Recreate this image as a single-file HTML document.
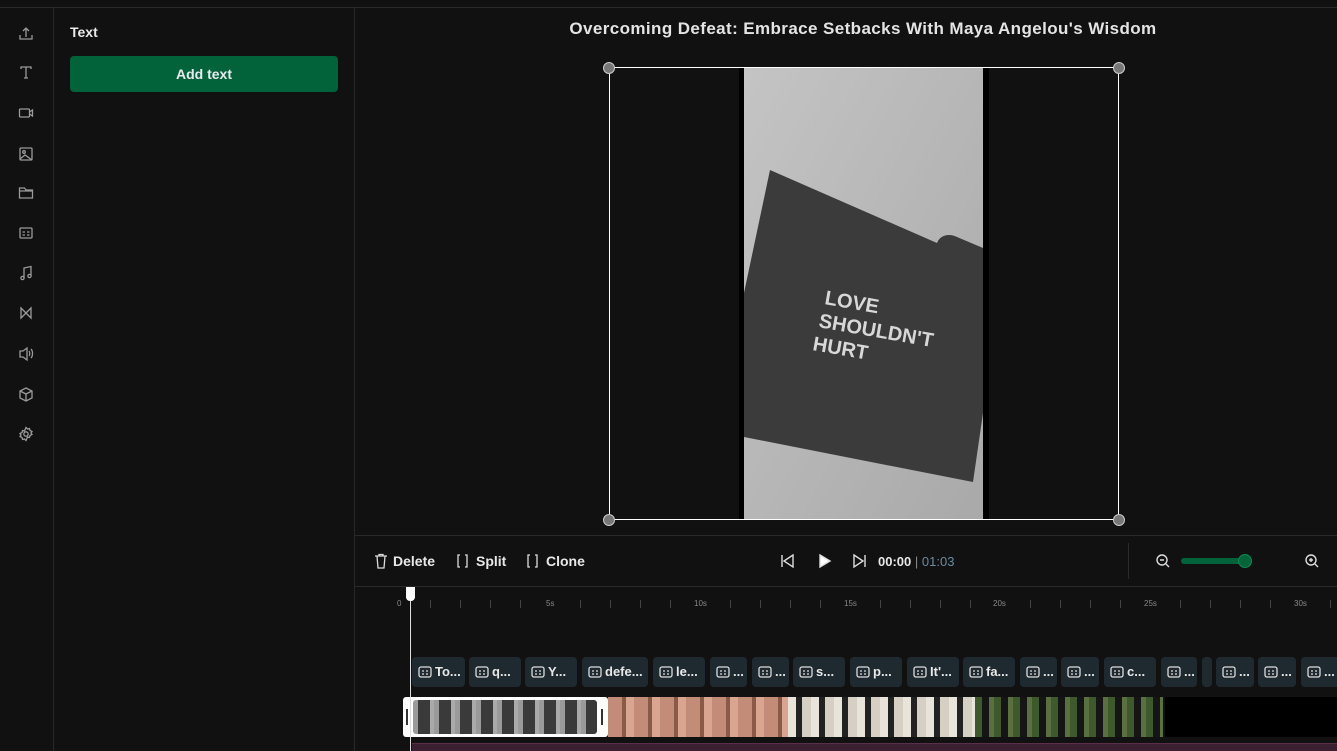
<!DOCTYPE html>
<html><head><meta charset="utf-8"><style>
*{margin:0;padding:0;box-sizing:border-box}
body{width:1337px;height:751px;overflow:hidden;background:#111112;font-family:"Liberation Sans",sans-serif;color:#e8e8e8;position:relative}
.abs{position:absolute}
.clip{position:absolute;top:657px;height:30px;background:#1f2a30;border-radius:4px;font-size:13px;font-weight:bold;color:#e8e8e8;line-height:30px;padding-left:6px;white-space:nowrap;overflow:hidden}
.clip svg{vertical-align:-3px;margin-right:3px}
.tk{position:absolute;top:600px;width:1px;height:8px;background:#444}
.lb{position:absolute;top:599px;font-size:8px;color:#888}
</style></head><body>
<div class="abs" style="left:0;top:7px;width:1337px;height:1px;background:#2a2a2a"></div>
<div class="abs" style="left:53px;top:8px;width:1px;height:743px;background:#262626"></div>
<div class="abs" style="left:354px;top:8px;width:1px;height:743px;background:#262626"></div>
<svg class="abs" style="left:18px;top:26px" width="16" height="440" fill="none" stroke="#9a9a9a" stroke-width="1.3">
<path d="M2 9v4h12V9M8 11V2M5 5l3-3 3 3"/>
<path d="M3 43v-2h10v2M8 41v11M6 52h4"/>
<rect x="1.5" y="83" width="10" height="8" rx="1"/><path d="M11.5 86l3-2v6l-3-2"/>
<rect x="2" y="122" width="12" height="12" rx="1"/><circle cx="6" cy="126" r="1.3"/><path d="M2 133l5-4 7 5"/>
<path d="M1.5 162h5l1.5 2h6.5v8h-13z M1.5 165h13"/>
<rect x="2" y="202" width="12" height="10" rx="1"/><path d="M4.5 206h2.5M9 206h2.5M4.5 209h2.5M9 209h2.5"/>
<path d="M6 252v-10l7-1.5v9"/><circle cx="4.5" cy="252" r="1.6"/><circle cx="11.5" cy="250" r="1.6"/>
<path d="M3 282l10 10V282L3 292z"/>
<path d="M2 325h3l4-3v12l-4-3H2z M11 325c1 1 1 4 0 5M13 323c2 2 2 7 0 9"/>
<path d="M8 362l6 3v7l-6 3-6-3v-7z M2 365l6 3 6-3M8 368v7"/>
<circle cx="8" cy="408" r="2.2"/><path d="M8 401.5l1.5 1.5 2-.5.5 2 2 1-1 1.5 1 1.5-2 1-.5 2-2-.5L8 414.5l-1.5-1.5-2 .5-.5-2-2-1 1-1.5-1-1.5 2-1 .5-2 2 .5z"/>
</svg>
<div class="abs" style="left:70px;top:24px;font-size:14px;font-weight:bold">Text</div>
<div class="abs" style="left:70px;top:56px;width:268px;height:36px;background:#02633a;border-radius:4px;text-align:center;line-height:36px;font-size:14px;font-weight:bold;color:#e8eaf0">Add text</div>
<div class="abs" style="left:355px;top:19px;width:1016px;text-align:center;font-size:17px;font-weight:bold;color:#e4e4e4;letter-spacing:0.4px">Overcoming Defeat: Embrace Setbacks With Maya Angelou's Wisdom</div>
<div class="abs" style="left:739px;top:68px;width:250px;height:452px;background:#000"></div>
<svg class="abs" style="left:744px;top:68px" width="239" height="452">
<defs><linearGradient id="g" x1="0" y1="0" x2="1" y2="1"><stop offset="0" stop-color="#c4c4c4"/><stop offset="1" stop-color="#a9a9a9"/></linearGradient></defs>
<rect width="239" height="452" fill="url(#g)"/>
<path d="M26 102L193 175c3-8 12-10 20-6L239 180V345l-10 69L0 369V225z" fill="#3b3b3b"/>
<text x="80" y="236" fill="#d8d8d8" font-size="20" font-weight="bold" font-family="Liberation Sans" transform="rotate(10 80 236)">LOVE</text>
<text x="74" y="259" fill="#d8d8d8" font-size="20" font-weight="bold" font-family="Liberation Sans" transform="rotate(10 74 259)">SHOULDN'T</text>
<text x="68" y="282" fill="#d8d8d8" font-size="20" font-weight="bold" font-family="Liberation Sans" transform="rotate(10 68 282)">HURT</text>
</svg>
<div class="abs" style="left:609px;top:67px;width:510px;height:453px;border:1px solid #fff"></div>
<div class="abs" style="left:603px;top:62px;width:12px;height:12px;border-radius:50%;background:#777;border:1px solid #ccc"></div>
<div class="abs" style="left:1113px;top:62px;width:12px;height:12px;border-radius:50%;background:#777;border:1px solid #ccc"></div>
<div class="abs" style="left:603px;top:514px;width:12px;height:12px;border-radius:50%;background:#777;border:1px solid #ccc"></div>
<div class="abs" style="left:1113px;top:514px;width:12px;height:12px;border-radius:50%;background:#777;border:1px solid #ccc"></div>
<div class="abs" style="left:355px;top:535px;width:982px;height:1px;background:#2a2a2a"></div>
<div class="abs" style="left:355px;top:586px;width:982px;height:1px;background:#2a2a2a"></div>
<div class="abs" style="left:1128px;top:543px;width:1px;height:36px;background:#2a2a2a"></div>
<svg class="abs" style="left:374px;top:553px" width="220" height="16" fill="none" stroke="#ddd" stroke-width="1.3">
<path d="M1 3h12M5 3V1.5h4V3M3 3l1 12h6l1-12"/>
<path d="M86 2h-2v12h2M91 2h2v12h-2"/>
<path d="M156 2h-2v12h2M161 2h2v12h-2"/>
</svg>
<div class="abs" style="left:393px;top:553px;font-size:14px;font-weight:bold">Delete</div>
<div class="abs" style="left:476px;top:553px;font-size:14px;font-weight:bold">Split</div>
<div class="abs" style="left:546px;top:553px;font-size:14px;font-weight:bold">Clone</div>
<svg class="abs" style="left:780px;top:553px" width="90" height="16" fill="none" stroke="#ddd" stroke-width="1.4">
<path d="M2 2v12M13 2L4 8l9 6z"/><path d="M40 2l10 6-10 6z" fill="#fff"/><path d="M74 2l9 6-9 6zM85 2v12"/></svg>
<div class="abs" style="left:878px;top:554px;font-size:13px;font-weight:bold">00:00 <span style="color:#888;font-weight:normal">|</span> <span style="color:#6c8aa0;font-weight:normal">01:03</span></div>
<svg class="abs" style="left:1155px;top:553px" width="170" height="16" fill="none" stroke="#ddd" stroke-width="1.4">
<circle cx="7" cy="7" r="5"/><path d="M11 11l3 3M5 7h4"/>
<circle cx="156" cy="7" r="5"/><path d="M160 11l3 3M154 7h4M156 5v4"/></svg>
<div class="abs" style="left:1181px;top:558px;width:64px;height:6px;background:#02633a;border-radius:3px"></div>
<div class="abs" style="left:1238px;top:554px;width:14px;height:14px;border-radius:50%;background:#02633a;border:1px solid #0a8a50"></div>
<div class="lb" style="left:397px">0</div><div class="lb" style="left:546px">5s</div><div class="lb" style="left:694px">10s</div><div class="lb" style="left:844px">15s</div><div class="lb" style="left:993px">20s</div><div class="lb" style="left:1144px">25s</div><div class="lb" style="left:1294px">30s</div>
<div class="tk" style="left:430px"></div><div class="tk" style="left:460px"></div><div class="tk" style="left:490px"></div><div class="tk" style="left:520px"></div><div class="tk" style="left:580px"></div><div class="tk" style="left:610px"></div><div class="tk" style="left:640px"></div><div class="tk" style="left:670px"></div><div class="tk" style="left:730px"></div><div class="tk" style="left:760px"></div><div class="tk" style="left:790px"></div><div class="tk" style="left:820px"></div><div class="tk" style="left:880px"></div><div class="tk" style="left:910px"></div><div class="tk" style="left:940px"></div><div class="tk" style="left:970px"></div><div class="tk" style="left:1030px"></div><div class="tk" style="left:1060px"></div><div class="tk" style="left:1090px"></div><div class="tk" style="left:1120px"></div><div class="tk" style="left:1180px"></div><div class="tk" style="left:1210px"></div><div class="tk" style="left:1240px"></div><div class="tk" style="left:1270px"></div><div class="tk" style="left:1330px"></div>
<div class="clip" style="left:412px;width:53px"><svg width="14" height="14" fill="none" stroke="#ddd" stroke-width="1.3"><rect x="1" y="2" width="12" height="10" rx="2"/><path d="M4 6h2M8 6h2M4 9h2M8 9h2"/></svg>To...</div>
<div class="clip" style="left:469px;width:52px"><svg width="14" height="14" fill="none" stroke="#ddd" stroke-width="1.3"><rect x="1" y="2" width="12" height="10" rx="2"/><path d="M4 6h2M8 6h2M4 9h2M8 9h2"/></svg>q...</div>
<div class="clip" style="left:525px;width:52px"><svg width="14" height="14" fill="none" stroke="#ddd" stroke-width="1.3"><rect x="1" y="2" width="12" height="10" rx="2"/><path d="M4 6h2M8 6h2M4 9h2M8 9h2"/></svg>Y...</div>
<div class="clip" style="left:582px;width:66px"><svg width="14" height="14" fill="none" stroke="#ddd" stroke-width="1.3"><rect x="1" y="2" width="12" height="10" rx="2"/><path d="M4 6h2M8 6h2M4 9h2M8 9h2"/></svg>defe...</div>
<div class="clip" style="left:653px;width:52px"><svg width="14" height="14" fill="none" stroke="#ddd" stroke-width="1.3"><rect x="1" y="2" width="12" height="10" rx="2"/><path d="M4 6h2M8 6h2M4 9h2M8 9h2"/></svg>le...</div>
<div class="clip" style="left:710px;width:37px"><svg width="14" height="14" fill="none" stroke="#ddd" stroke-width="1.3"><rect x="1" y="2" width="12" height="10" rx="2"/><path d="M4 6h2M8 6h2M4 9h2M8 9h2"/></svg>...</div>
<div class="clip" style="left:752px;width:37px"><svg width="14" height="14" fill="none" stroke="#ddd" stroke-width="1.3"><rect x="1" y="2" width="12" height="10" rx="2"/><path d="M4 6h2M8 6h2M4 9h2M8 9h2"/></svg>...</div>
<div class="clip" style="left:793px;width:52px"><svg width="14" height="14" fill="none" stroke="#ddd" stroke-width="1.3"><rect x="1" y="2" width="12" height="10" rx="2"/><path d="M4 6h2M8 6h2M4 9h2M8 9h2"/></svg>s...</div>
<div class="clip" style="left:850px;width:52px"><svg width="14" height="14" fill="none" stroke="#ddd" stroke-width="1.3"><rect x="1" y="2" width="12" height="10" rx="2"/><path d="M4 6h2M8 6h2M4 9h2M8 9h2"/></svg>p...</div>
<div class="clip" style="left:907px;width:52px"><svg width="14" height="14" fill="none" stroke="#ddd" stroke-width="1.3"><rect x="1" y="2" width="12" height="10" rx="2"/><path d="M4 6h2M8 6h2M4 9h2M8 9h2"/></svg>It'...</div>
<div class="clip" style="left:963px;width:52px"><svg width="14" height="14" fill="none" stroke="#ddd" stroke-width="1.3"><rect x="1" y="2" width="12" height="10" rx="2"/><path d="M4 6h2M8 6h2M4 9h2M8 9h2"/></svg>fa...</div>
<div class="clip" style="left:1020px;width:37px"><svg width="14" height="14" fill="none" stroke="#ddd" stroke-width="1.3"><rect x="1" y="2" width="12" height="10" rx="2"/><path d="M4 6h2M8 6h2M4 9h2M8 9h2"/></svg>...</div>
<div class="clip" style="left:1061px;width:38px"><svg width="14" height="14" fill="none" stroke="#ddd" stroke-width="1.3"><rect x="1" y="2" width="12" height="10" rx="2"/><path d="M4 6h2M8 6h2M4 9h2M8 9h2"/></svg>...</div>
<div class="clip" style="left:1104px;width:52px"><svg width="14" height="14" fill="none" stroke="#ddd" stroke-width="1.3"><rect x="1" y="2" width="12" height="10" rx="2"/><path d="M4 6h2M8 6h2M4 9h2M8 9h2"/></svg>c...</div>
<div class="clip" style="left:1161px;width:36px"><svg width="14" height="14" fill="none" stroke="#ddd" stroke-width="1.3"><rect x="1" y="2" width="12" height="10" rx="2"/><path d="M4 6h2M8 6h2M4 9h2M8 9h2"/></svg>...</div>
<div class="clip" style="left:1202px;width:10px;padding-left:2px"></div>
<div class="clip" style="left:1216px;width:38px"><svg width="14" height="14" fill="none" stroke="#ddd" stroke-width="1.3"><rect x="1" y="2" width="12" height="10" rx="2"/><path d="M4 6h2M8 6h2M4 9h2M8 9h2"/></svg>...</div>
<div class="clip" style="left:1258px;width:38px"><svg width="14" height="14" fill="none" stroke="#ddd" stroke-width="1.3"><rect x="1" y="2" width="12" height="10" rx="2"/><path d="M4 6h2M8 6h2M4 9h2M8 9h2"/></svg>...</div>
<div class="clip" style="left:1301px;width:40px"><svg width="14" height="14" fill="none" stroke="#ddd" stroke-width="1.3"><rect x="1" y="2" width="12" height="10" rx="2"/><path d="M4 6h2M8 6h2M4 9h2M8 9h2"/></svg>...</div>
<div class="abs" style="left:608px;top:697px;width:180px;height:40px;background:repeating-linear-gradient(90deg,#c28c78 0 14px,#8a5a48 14px 18px,#d9a590 18px 26px)"></div>
<div class="abs" style="left:788px;top:697px;width:187px;height:40px;background:repeating-linear-gradient(90deg,#e8e4dc 0 8px,#222 8px 14px,#d6d0c4 14px 23px)"></div>
<div class="abs" style="left:975px;top:697px;width:188px;height:40px;background:repeating-linear-gradient(90deg,#3e5a2c 0 7px,#151515 7px 14px,#5a7040 14px 19px)"></div>
<div class="abs" style="left:1165px;top:697px;width:172px;height:40px;background:#000"></div>
<div class="abs" style="left:403px;top:697px;width:205px;height:40px;background:#fff;border-radius:3px"></div>
<div class="abs" style="left:413px;top:700px;width:184px;height:34px;border-radius:3px;background:repeating-linear-gradient(90deg,#9a9a9a 0 5px,#3a3a3a 5px 17px,#aaa 17px 21px)"></div>
<div class="abs" style="left:406px;top:709px;width:2px;height:16px;background:#333"></div>
<div class="abs" style="left:601px;top:709px;width:2px;height:16px;background:#333"></div>
<div class="abs" style="left:412px;top:743px;width:925px;height:8px;background:#3a2030;border-top:1px solid #5a3048"></div>
<div class="abs" style="left:410px;top:592px;width:1px;height:159px;background:#ddd"></div>
<div class="abs" style="left:406px;top:587px;width:9px;height:14px;background:#fff;border-radius:0 0 4px 4px"></div>
</body></html>
